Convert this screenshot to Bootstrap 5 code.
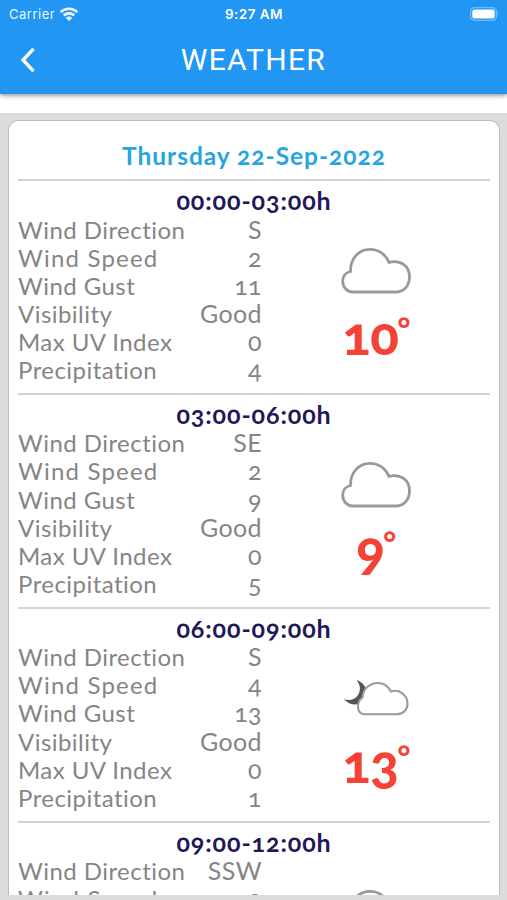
<!DOCTYPE html>
<html lang="en">
<head>
<meta charset="utf-8">
<meta name="viewport" content="width=device-width, initial-scale=1">
<title>Weather</title>
<link href="https://cdn.jsdelivr.net/npm/bootstrap@5.3.0/dist/css/bootstrap.min.css" rel="stylesheet">
<style>
body{font-family:Lato,"Open Sans",sans-serif;background:#fff;height:900px;overflow:hidden}
.app-head{height:94px;flex:none;background:#2196f3;color:#fff;font-family:Inter,sans-serif;box-shadow:0 1px 5px rgba(0,0,0,.5);z-index:2}
.status{height:28px;padding:0 8px 0 9px;font-size:13px;line-height:28px}
.status>*{flex:1 1 0}
.carrier{letter-spacing:.5px;opacity:.92}
.clock{font-weight:600;font-size:13.5px;letter-spacing:.45px}
.titlebar{height:64px;padding:0 20px}
.screen-title{font-family:Roboto,sans-serif;font-size:30px;line-height:64px;letter-spacing:1.3px;font-weight:400}
.feed{margin-top:19px;background:#dcdcdc;padding:7px 7px 5px 8px;min-height:0}
.sheet{background:#fff;border:1px solid #bcbcbc;border-bottom:0;border-radius:10px 10px 0 0;padding:0 9px;overflow:hidden;font-variant-numeric:oldstyle-nums;font-variant-ligatures:none}
.day{color:#27a5de;font-size:24.5px;font-weight:700;line-height:34px;padding:18px 0 6px;letter-spacing:.98px}
.slot{height:213.9px;flex:none;border-top:2px solid #d2d2d2}
.hours{color:#231758;font-size:25px;font-weight:700;line-height:39.500px;height:34.5px;letter-spacing:.9px}
.facts{width:244px;font-size:24px;color:#858585}
.facts>div{height:28.1px;line-height:27.2px;white-space:nowrap;letter-spacing:.45px}
.facts span+span{font-size:25px;letter-spacing:.4px}
.facts .wide{letter-spacing:1.2px}
.temp{color:#f44336;font-weight:900;font-size:53px;line-height:56px;height:56px;letter-spacing:-.5px}
.deg{font-size:31px;line-height:43px;margin-left:-1px}
.sky{height:61px;margin-top:14.500px}
.night{margin-top:18.500px;height:57px}
</style>
<script src="https://cdn.jsdelivr.net/npm/bootstrap@5.3.0/dist/js/bootstrap.bundle.min.js"></script>
</head>
<body class="d-flex flex-column">
<svg class="d-none">
  <symbol id="cloud" viewBox="0 0 72 48"><path d="M12.500 46H56.500C64 46 69.500 39.500 69.500 31C69.500 20 60.500 13.500 49 16.300C45.200 8 38 3.300 30.200 3.300C19 3.300 10.300 12 10.500 25.500C5.500 26.500 2.700 30.500 2.700 35.300C2.700 41 7 46 12.500 46Z" fill="#fff" stroke="#999" stroke-width="2.800"/></symbol>
</svg>
<header class="app-head position-relative">
  <div class="status d-flex align-items-center">
    <div class="carrier d-flex align-items-center"><span>Carrier</span>
      <svg class="ms-1" width="20" height="15" viewBox="0 0 20 15" fill="none" stroke="#fff" stroke-width="2.600"><path d="M1.700 5.100C6.500 .600 13.500 .600 18.300 5.100M4.800 8.500C7.800 5.700 12.200 5.700 15.200 8.500"/><path d="M10 14 6.800 10.900Q10 8.300 13.200 10.900Z" fill="#fff" stroke="none"/></svg>
    </div>
    <div class="clock text-center">9:27 AM</div>
    <div class="d-flex justify-content-end">
      <svg width="30" height="14" viewBox="0 0 30 14"><rect x="1.600" y=".600" width="25.800" height="12.800" rx="4" fill="none" stroke="#73bcf7" stroke-width="1.200"/><rect x="3.300" y="2.500" width="22.400" height="9" rx="2" fill="#fff"/><path d="M28.300 4.800Q30.500 7 28.300 9.200Z" fill="#73bcf7"/></svg>
    </div>
  </div>
  <div class="titlebar d-flex align-items-center">
    <svg width="16" height="26" viewBox="0 0 16 26" fill="none" stroke="#fff" stroke-width="3.400"><path d="M13.500 1.800 3 13 13.500 24.200"/></svg>
    <h1 class="screen-title flex-grow-1 text-center m-0">WEATHER</h1>
    <span class="px-2"></span>
  </div>
</header>
<main class="feed d-flex flex-column flex-grow-1">
  <section class="sheet d-flex flex-column flex-grow-1">
    <div class="day text-center">Thursday 22-Sep-2022</div>

    <article class="slot">
      <div class="hours text-center">00:00-03:00h</div>
      <div class="d-flex">
        <div class="facts">
          <div class="d-flex justify-content-between"><span>Wind Direction</span><span>S</span></div>
          <div class="d-flex justify-content-between"><span class="wide">Wind Speed</span><span>2</span></div>
          <div class="d-flex justify-content-between"><span>Wind Gust</span><span>11</span></div>
          <div class="d-flex justify-content-between"><span>Visibility</span><span>Good</span></div>
          <div class="d-flex justify-content-between"><span>Max UV Index</span><span>0</span></div>
          <div class="d-flex justify-content-between"><span>Precipitation</span><span>4</span></div>
        </div>
        <div class="flex-grow-1 d-flex flex-column align-items-center pt-3">
          <div class="sky"><svg width="72" height="48"><use href="#cloud"/></svg></div>
          <div class="temp d-flex"><span>10</span><span class="deg">°</span></div>
        </div>
      </div>
    </article>

    <article class="slot">
      <div class="hours text-center">03:00-06:00h</div>
      <div class="d-flex">
        <div class="facts">
          <div class="d-flex justify-content-between"><span>Wind Direction</span><span>SE</span></div>
          <div class="d-flex justify-content-between"><span class="wide">Wind Speed</span><span>2</span></div>
          <div class="d-flex justify-content-between"><span>Wind Gust</span><span>9</span></div>
          <div class="d-flex justify-content-between"><span>Visibility</span><span>Good</span></div>
          <div class="d-flex justify-content-between"><span>Max UV Index</span><span>0</span></div>
          <div class="d-flex justify-content-between"><span>Precipitation</span><span>5</span></div>
        </div>
        <div class="flex-grow-1 d-flex flex-column align-items-center pt-3">
          <div class="sky"><svg width="72" height="48"><use href="#cloud"/></svg></div>
          <div class="temp d-flex"><span>9</span><span class="deg">°</span></div>
        </div>
      </div>
    </article>

    <article class="slot">
      <div class="hours text-center">06:00-09:00h</div>
      <div class="d-flex">
        <div class="facts">
          <div class="d-flex justify-content-between"><span>Wind Direction</span><span>S</span></div>
          <div class="d-flex justify-content-between"><span class="wide">Wind Speed</span><span>4</span></div>
          <div class="d-flex justify-content-between"><span>Wind Gust</span><span>13</span></div>
          <div class="d-flex justify-content-between"><span>Visibility</span><span>Good</span></div>
          <div class="d-flex justify-content-between"><span>Max UV Index</span><span>0</span></div>
          <div class="d-flex justify-content-between"><span>Precipitation</span><span>1</span></div>
        </div>
        <div class="flex-grow-1 d-flex flex-column align-items-center pt-3">
          <div class="sky night"><svg width="72" height="48" viewBox="0 0 72 48"><path d="M16.500 2C25 5 29 13 25 20.500C21 28 10.500 28.500 4 21.200C10 23 15 21.500 18 17C21 12.500 20.500 7 16.500 2Z" fill="#555"/><path d="M24.500 36.300H57C63.500 36 67.800 31.500 67.500 25C67 16.500 59 11 51 13.500C48 8 43 5 38 5C29.500 5 23 11 22.500 19.500C19.500 21.500 18 24.500 18 28.500C18 33.500 20.500 36 24.500 36.300Z" fill="#fff" stroke="#999" stroke-width="2"/></svg></div>
          <div class="temp d-flex"><span>13</span><span class="deg">°</span></div>
        </div>
      </div>
    </article>

    <article class="slot">
      <div class="hours text-center">09:00-12:00h</div>
      <div class="d-flex">
        <div class="facts">
          <div class="d-flex justify-content-between"><span>Wind Direction</span><span>SSW</span></div>
          <div class="d-flex justify-content-between"><span class="wide">Wind Speed</span><span>3</span></div>
        </div>
        <div class="flex-grow-1 d-flex flex-column align-items-center pt-3">
          <div class="sky"><svg width="72" height="48"><use href="#cloud"/></svg></div>
        </div>
      </div>
    </article>
  </section>
</main>
</body>
</html>
